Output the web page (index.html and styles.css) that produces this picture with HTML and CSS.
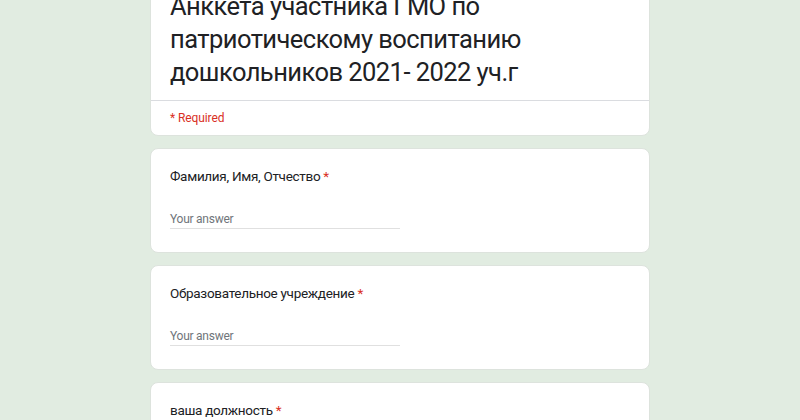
FILE: index.html
```html
<!DOCTYPE html>
<html lang="ru">
<head>
<meta charset="utf-8">
<link rel="stylesheet" href="styles.css">
</head>
<body>
<main class="form">
  <section class="card title-card">
    <div class="title-block">
      <h1 class="title">Анккета участника ГМО по патриотическому воспитанию дошкольников 2021- 2022 уч.г</h1>
    </div>
    <div class="required-note">* Required</div>
  </section>
  <section class="card question">
    <div class="label">Фамилия, Имя, Отчество <span class="star">*</span></div>
    <div class="answer">Your answer</div>
  </section>
  <section class="card question">
    <div class="label">Образовательное учреждение <span class="star">*</span></div>
    <div class="answer">Your answer</div>
  </section>
  <section class="card question">
    <div class="label">ваша должность <span class="star">*</span></div>
    <div class="answer">Your answer</div>
  </section>
</main>
</body>
</html>
```
FILE: styles.css
```css
html, body {
  margin: 0;
  padding: 0;
}
body {
  background: #e1ece1;
  font-family: Roboto, "Noto Sans", "Liberation Sans", sans-serif;
  color: #202124;
  overflow: hidden;
}
.form {
  width: 500px;
  margin: 0 auto;
  display: flex;
  flex-direction: column;
  gap: 12px;
}
.card {
  background: #fff;
  border: 1px solid #dde3dd;
  border-radius: 8px;
  box-sizing: border-box;
}
.title-card {
  margin-top: -35px;
}
.title-block {
  padding: 24px 19px 11px;
  border-bottom: 1px solid #dadce0;
}
.title {
  margin: 0;
  font-weight: 400;
  font-size: 25.5px;
  line-height: 33px;
  letter-spacing: -0.55px;
}
.required-note {
  padding: 8px 19px 8px;
  font-size: 12px;
  line-height: 18px;
  letter-spacing: -0.1px;
  color: #d93025;
}
.question {
  padding: 15px 19px 23px;
}
.label {
  font-size: 13.5px;
  line-height: 24px;
  letter-spacing: -0.3px;
}
.star {
  color: #d93025;
}
.answer {
  margin-top: 22px;
  width: 230px;
  font-size: 12px;
  line-height: 18px;
  letter-spacing: -0.25px;
  color: #70757a;
  border-bottom: 1px solid #e0e0e0;
}
```
